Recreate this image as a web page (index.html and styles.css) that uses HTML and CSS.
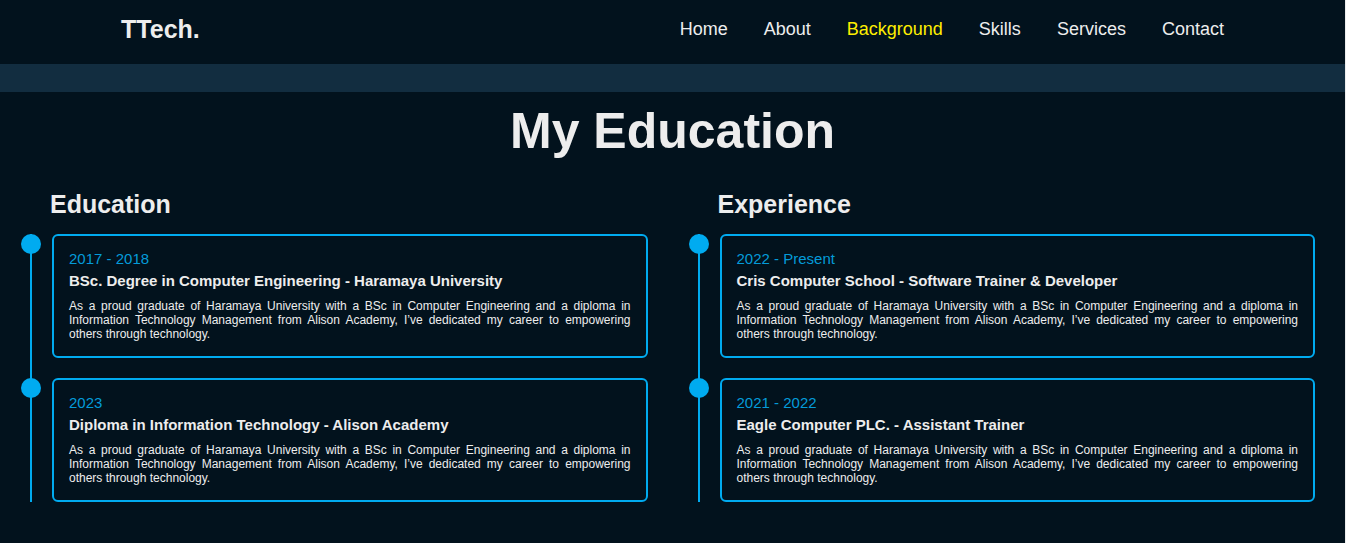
FILE: index.html
```html
<!DOCTYPE html>
<html lang="en">
<head>
<meta charset="utf-8">
<meta name="viewport" content="width=device-width, initial-scale=1">
<title>TTech.</title>
<link rel="stylesheet" href="styles.css">
</head>
<body>
<header class="header">
  <a class="logo" href="#home">TTech.</a>
  <nav class="nav">
    <a href="#home">Home</a>
    <a href="#about">About</a>
    <a class="active" href="#background">Background</a>
    <a href="#skills">Skills</a>
    <a href="#services">Services</a>
    <a href="#contact">Contact</a>
  </nav>
</header>
<div class="band"></div>
<main class="background" id="background">
  <h1 class="heading">My Education</h1>
  <div class="columns">
    <section class="column">
      <h2 class="title">Education</h2>
      <div class="timeline">
        <article class="entry">
          <div class="card">
            <div class="year">2017 - 2018</div>
            <h3>BSc. Degree in Computer Engineering - Haramaya University</h3>
            <p>As a proud graduate of Haramaya University with a BSc in Computer Engineering and a diploma in Information Technology Management from Alison Academy, I’ve dedicated my career to empowering others through technology.</p>
          </div>
        </article>
        <article class="entry">
          <div class="card">
            <div class="year">2023</div>
            <h3>Diploma in Information Technology - Alison Academy</h3>
            <p>As a proud graduate of Haramaya University with a BSc in Computer Engineering and a diploma in Information Technology Management from Alison Academy, I’ve dedicated my career to empowering others through technology.</p>
          </div>
        </article>
      </div>
    </section>
    <section class="column">
      <h2 class="title">Experience</h2>
      <div class="timeline">
        <article class="entry">
          <div class="card">
            <div class="year">2022 - Present</div>
            <h3>Cris Computer School - Software Trainer &amp; Developer</h3>
            <p>As a proud graduate of Haramaya University with a BSc in Computer Engineering and a diploma in Information Technology Management from Alison Academy, I’ve dedicated my career to empowering others through technology.</p>
          </div>
        </article>
        <article class="entry">
          <div class="card">
            <div class="year">2021 - 2022</div>
            <h3>Eagle Computer PLC. - Assistant Trainer</h3>
            <p>As a proud graduate of Haramaya University with a BSc in Computer Engineering and a diploma in Information Technology Management from Alison Academy, I’ve dedicated my career to empowering others through technology.</p>
          </div>
        </article>
      </div>
    </section>
  </div>
</main>
</body>
</html>
```
FILE: styles.css
```css
:root {
  --bg: #02121d;
  --band: #122d40;
  --text: #ededed;
  --accent: #00abf0;
  --accent-text: #049bd9;
}

* {
  box-sizing: border-box;
  margin: 0;
  padding: 0;
}

html {
  background: #ededed;
}

body {
  min-height: 100vh;
  margin-right: 1px;
  background: var(--bg);
  color: var(--text);
  font-family: "Liberation Sans", Arial, sans-serif;
}

a {
  color: inherit;
  text-decoration: none;
}

.header {
  display: flex;
  align-items: center;
  justify-content: space-between;
  height: 64px;
  padding: 0 9% 6px;
}

.logo {
  font-size: 25px;
  font-weight: 700;
}

.nav {
  display: flex;
  gap: 36px;
  font-size: 18px;
}

.nav .active {
  color: #ffee00;
}

.band {
  height: 28px;
  background: var(--band);
}

.background {
  padding: 10px 30px 40px 20px;
}

.heading {
  padding-left: 10px;
  font-size: 50px;
  line-height: 58px;
  text-align: center;
}

.columns {
  display: grid;
  grid-template-columns: 1fr 1fr;
  gap: 40px;
  padding-top: 28px;
}

.title {
  padding-left: 30px;
  margin-bottom: 14px;
  font-size: 25px;
  line-height: 32px;
}

.timeline {
  display: grid;
  gap: 20px;
  margin-left: 10px;
  border-left: 2px solid var(--accent);
}

.entry {
  position: relative;
  padding-left: 20px;
}

.entry::before {
  content: "";
  position: absolute;
  top: 0;
  left: -11px;
  width: 20px;
  height: 20px;
  border-radius: 50%;
  background: var(--accent);
}

.card {
  padding: 13px 15px 15px;
  border: 2px solid var(--accent);
  border-radius: 6px;
}

.year {
  color: var(--accent-text);
  font-size: 15px;
  line-height: 20px;
}

.card h3 {
  font-size: 15px;
  line-height: 24px;
}

.card p {
  padding-top: 6px;
  font-size: 12px;
  line-height: 14px;
  text-align: justify;
}
```
